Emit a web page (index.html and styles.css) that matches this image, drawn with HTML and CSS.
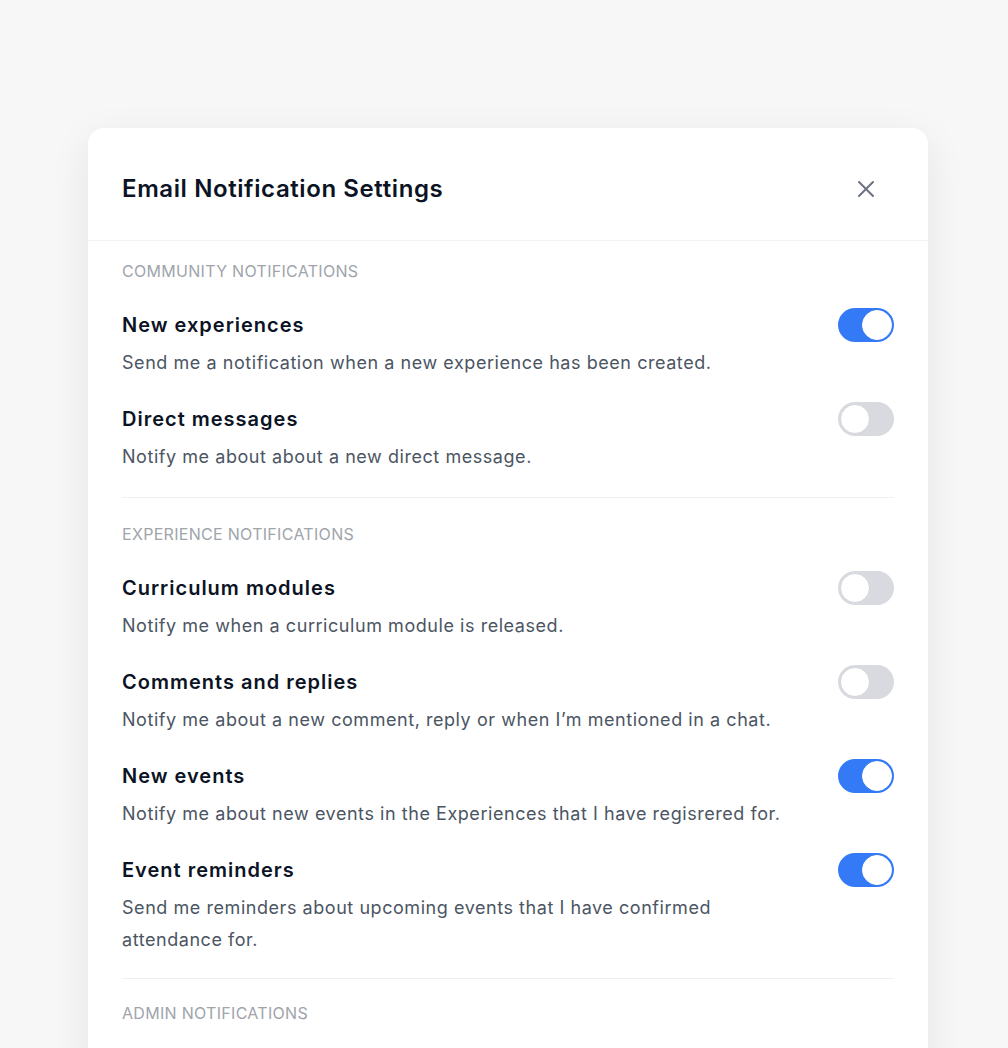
FILE: index.html
```html
<!DOCTYPE html>
<html lang="en">
<head>
    <meta charset="UTF-8">
    <meta name="viewport" content="width=device-width, initial-scale=1.0">
    <title>Email Notification Settings</title>
    <link rel="stylesheet" href="styles.css">
</head>
<body>
    <div class="modal">
        <div class="modal-header">
            <h1>Email Notification Settings</h1>
            <button class="close" aria-label="Close">
                <svg width="18" height="18" viewBox="0 0 18 18" fill="none" stroke="#6b7280" stroke-width="2" stroke-linecap="round">
                    <path d="M2 2L16 16M16 2L2 16"/>
                </svg>
            </button>
        </div>

        <div class="modal-body">
            <div class="section">
                <div class="section-label">Community notifications</div>

                <div class="setting">
                    <div class="setting-text">
                        <h2>New experiences</h2>
                        <p>Send me a notification when a new experience has been created.</p>
                    </div>
                    <span class="toggle on"></span>
                </div>

                <div class="setting">
                    <div class="setting-text">
                        <h2>Direct messages</h2>
                        <p>Notify me about about a new direct message.</p>
                    </div>
                    <span class="toggle"></span>
                </div>
            </div>

            <div class="section">
                <div class="section-label">Experience notifications</div>

                <div class="setting">
                    <div class="setting-text">
                        <h2>Curriculum modules</h2>
                        <p>Notify me when a curriculum module is released.</p>
                    </div>
                    <span class="toggle"></span>
                </div>

                <div class="setting">
                    <div class="setting-text">
                        <h2>Comments and replies</h2>
                        <p>Notify me about a new comment, reply or when I’m mentioned in a chat.</p>
                    </div>
                    <span class="toggle"></span>
                </div>

                <div class="setting">
                    <div class="setting-text">
                        <h2>New events</h2>
                        <p>Notify me about new events in the Experiences that I have regisrered for.</p>
                    </div>
                    <span class="toggle on"></span>
                </div>

                <div class="setting">
                    <div class="setting-text">
                        <h2>Event reminders</h2>
                        <p>Send me reminders about upcoming events that I have confirmed attendance for.</p>
                    </div>
                    <span class="toggle on"></span>
                </div>
            </div>

            <div class="section section-last">
                <div class="section-label">Admin notifications</div>
            </div>
        </div>
    </div>
</body>
</html>
```

FILE: styles.css
```css
html, body {
    overflow: hidden;
}
body {
    font-family: Inter, "Noto Sans", sans-serif;
    margin: 0;
    padding: 128px 80px 0 88px;
    background: #f7f7f7;
    color: #0f172a;
}
.modal {
    width: 840px;
    background: #fff;
    border-radius: 16px;
    box-shadow: 0 12px 40px rgba(0, 0, 0, 0.08);
}
.modal-header {
    display: flex;
    align-items: center;
    justify-content: space-between;
    padding: 45px 34px 35px;
    border-bottom: 1px solid #f1f2f4;
}
.modal-header h1 {
    margin: 0;
    font-size: 24px;
    line-height: 32px;
    font-weight: 600;
    letter-spacing: 0.6px;
    color: #0b1324;
}
.close {
    background: none;
    border: none;
    padding: 0;
    margin-right: 19px;
    display: flex;
    cursor: pointer;
}
.modal-body {
    padding: 0 34px;
}
.section {
    padding: 18px 0 24px;
    border-bottom: 1px solid #eeeff1;
}
.section + .section {
    padding: 24px 0 22px;
}
.section + .section-last {
    padding: 22px 0 80px;
    border-bottom: none;
}
.section-label {
    font-size: 16px;
    line-height: 24px;
    letter-spacing: 0.3px;
    color: #a0a4ab;
    text-transform: uppercase;
}
.setting {
    display: flex;
    align-items: flex-start;
    gap: 48px;
    margin-top: 26px;
}
.section-label + .setting {
    margin-top: 28px;
}
.setting-text {
    flex: 1;
}
.setting h2 {
    margin: 0;
    font-size: 20px;
    line-height: 28px;
    font-weight: 600;
    letter-spacing: 1px;
    color: #0b1324;
}
.setting p {
    margin: 8px 0 0;
    font-size: 18px;
    line-height: 32px;
    letter-spacing: 0.55px;
    color: #4b5563;
}
.toggle {
    flex: none;
    position: relative;
    width: 56px;
    height: 34px;
    margin-top: -3px;
    border-radius: 17px;
    background: #d8dadf;
}
.toggle::after {
    content: "";
    position: absolute;
    top: 2px;
    left: 2px;
    width: 28px;
    height: 28px;
    border-radius: 50%;
    background: #fff;
    border: 1px solid #d4d6db;
}
.toggle.on {
    background: #3479f6;
}
.toggle.on::after {
    left: auto;
    right: 2px;
    border-color: #fff;
}
```
